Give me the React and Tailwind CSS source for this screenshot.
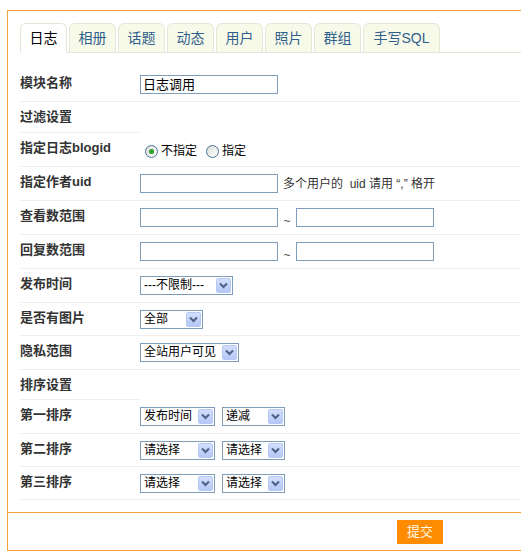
import React from 'react';

const FONT = "font-['Liberation_Sans','Noto_Sans_CJK_SC',sans-serif]";

const tabs = ['日志', '相册', '话题', '动态', '用户', '照片', '群组', '手写SQL'];

// XP-style dropdown
const Select = ({ value, width }) => (
  <div
    className="flex h-[19px] items-center border border-[#7f9db9] bg-white"
    style={{ width }}
  >
    <span className="flex-1 overflow-hidden whitespace-nowrap pl-[3px] text-[12px] leading-[17px] text-black">
      {value}
    </span>
    <span className="m-px flex h-[15px] w-[15px] items-center justify-center rounded-[2px] border border-[#b7c9f3] bg-gradient-to-b from-[#d2defc] to-[#b4c8f6]">
      <svg width="9" height="7" viewBox="0 0 9 7">
        <path d="M1 1.5 L4.5 5 L8 1.5" fill="none" stroke="#4d6185" strokeWidth="2" />
      </svg>
    </span>
  </div>
);

const Input = ({ value = '', w = 'w-[138px]' }) => (
  <div className={`h-[19px] ${w} border border-[#7f9db9] bg-white pl-[2px] text-[13px] leading-[17px] text-black`}>
    {value}
  </div>
);

const Radio = ({ checked }) => (
  <span className="flex h-[13px] w-[13px] items-center justify-center rounded-full border border-[#4a7397] bg-gradient-to-br from-[#dcdcd6] to-white">
    {checked && <span className="h-[5px] w-[5px] rounded-full bg-[#2aa12a]" />}
  </span>
);

const Row = ({ label, h, gap = 'gap-[7px]', children }) => (
  <div className="flex border-b border-[#efefef]" style={{ height: h }}>
    <div className="w-[120px] pt-[6px] text-[13px] font-bold leading-[18px] text-[#333]">{label}</div>
    <div className={`flex flex-1 items-start ${gap} pt-[7px]`}>{children}</div>
  </div>
);

const Section = ({ label, h }) => (
  <div className="flex" style={{ height: h }}>
    <div className="w-[120px] border-b border-[#efefef] pt-[6px] text-[13px] font-bold leading-[18px] text-[#333]">
      {label}
    </div>
  </div>
);

const Tilde = () => <span className="w-[18px] pt-[5px] text-center text-[12px] leading-[17px] text-[#555]">~</span>;

export default function App() {
  return (
    <div className={`h-[551px] w-[521px] overflow-hidden bg-white pl-[7px] pt-[10px] ${FONT}`}>
      <div className="h-[541px] w-[560px] border border-[#f4a23a]">
        {/* tabs */}
        <div className="ml-[12px] mt-[12px] flex gap-[2px] border-b border-[#e5e5d8]">
          {tabs.map((t, i) => (
            <div
              key={t}
              className={`-mb-px flex h-[30px] items-center justify-center rounded-t-[6px] border px-[8px] text-[14px] ${
                i === 0
                  ? 'border-[#e5e5d8] border-b-white bg-white text-black'
                  : 'border-[#e5e5d8] bg-[#f8fae9] text-[#2f5f8c]'
              } ${t === '手写SQL' ? 'w-[77px]' : 'w-[47px]'}`}
            >
              {t}
            </div>
          ))}
        </div>

        <div className="ml-[12px] mt-[15px]">
          <Row label="模块名称" h={34}>
            <Input value="日志调用" />
          </Row>
          <Section label="过滤设置" h={31} />
          <Row label="指定日志blogid" h={34}>
            <div className="flex items-center gap-[3px] pl-[5px] pt-[3px] text-[12px] leading-[17px] text-black">
              <Radio checked />
              <span className="mr-[6px]">不指定</span>
              <Radio />
              <span>指定</span>
            </div>
          </Row>
          <Row label="指定作者uid" h={34}>
            <Input />
            <span className="-ml-[2px] pt-[2px] text-[12px] leading-[17px] text-[#333]">多个用户的&nbsp; uid 请用 “,” 格开</span>
          </Row>
          <Row label="查看数范围" h={34} gap="gap-0">
            <Input />
            <Tilde />
            <Input />
          </Row>
          <Row label="回复数范围" h={34} gap="gap-0">
            <Input />
            <Tilde />
            <Input />
          </Row>
          <Row label="发布时间" h={34}>
            <Select value="---不限制---" width={93} />
          </Row>
          <Row label="是否有图片" h={33}>
            <Select value="全部" width={63} />
          </Row>
          <Row label="隐私范围" h={34}>
            <Select value="全站用户可见" width={99} />
          </Row>
          <Section label="排序设置" h={30} />
          <Row label="第一排序" h={34}>
            <Select value="发布时间" width={75} />
            <Select value="递减" width={63} />
          </Row>
          <Row label="第二排序" h={33}>
            <Select value="请选择" width={75} />
            <Select value="请选择" width={63} />
          </Row>
          <Row label="第三排序" h={33}>
            <Select value="请选择" width={75} />
            <Select value="请选择" width={63} />
          </Row>
        </div>

        {/* footer */}
        <div className="mt-[12px] h-[37px] border-t border-[#f4a23a] pl-[389px] pt-[6px]">
          <button className="h-[24px] w-[46px] bg-[#ff8c00] text-[13px] text-[#fff8e8]">提交</button>
        </div>
      </div>
    </div>
  );
}
